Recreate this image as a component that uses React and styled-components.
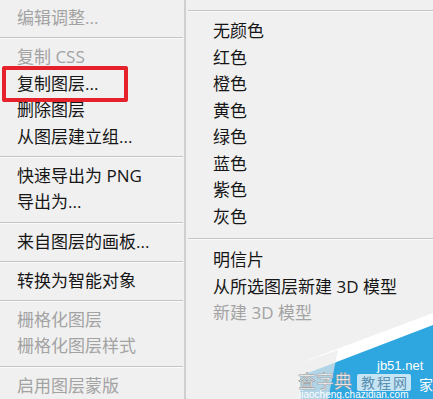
import React from "react";
import styled, { createGlobalStyle } from "styled-components";

const GlobalStyle = createGlobalStyle`
  html, body {
    margin: 0;
    padding: 0;
    background: #f0f0f0;
  }
  body {
    font-family: "Open Sans", "Noto Sans CJK SC", sans-serif;
  }
`;

const StyledFrame = styled.div`
  position: relative;
  display: flex;
  flex-direction: row;
  width: 433px;
  height: 399px;
  overflow: hidden;
  background: #f0f0f0;
`;

const StyledMenu = styled.div`
  display: flex;
  flex-direction: column;
  flex: ${(p) => (p.$side === "left" ? "0 0 184px" : "1 1 auto")};
  padding-top: ${(p) => (p.$side === "left" ? "5px" : "3px")};
  border-right: ${(p) => (p.$side === "left" ? "2px solid #cfcfcf" : "none")};
  padding-left: ${(p) => (p.$side === "left" ? "0" : "2px")};
`;

const StyledItem = styled.div`
  height: 26.5px;
  line-height: 26.5px;
  padding-left: ${(p) => (p.$side === "left" ? "17px" : "25px")};
  font-size: 17px;
  white-space: nowrap;
  color: ${(p) => (p.$disabled ? "#a3a3a3" : "#161616")};
`;

const StyledSeparator = styled.div`
  height: ${(p) => (p.$tall ? "17px" : p.$side === "left" ? "16px" : "15px")};
  display: flex;
  align-items: center;
  margin-right: ${(p) => (p.$side === "left" ? "1px" : "0")};

  &::after {
    content: "";
    flex: 1;
    height: 1px;
    background: #c4c4c4;
    box-shadow: 0 1px 0 #fbfbfb;
  }
`;

const StyledHighlight = styled.div`
  position: absolute;
  left: 2px;
  top: 66px;
  width: 118px;
  height: 28px;
  border: 4px solid #e5212b;
  border-radius: 2px;
`;

const StyledWatermark = styled.svg`
  position: absolute;
  right: 0;
  bottom: 0;
`;

const leftMenu = [
  { label: "编辑调整...", disabled: true },
  "sep",
  { label: "复制 CSS", disabled: true },
  { label: "复制图层..." },
  { label: "删除图层" },
  { label: "从图层建立组..." },
  "sep",
  { label: "快速导出为 PNG" },
  { label: "导出为..." },
  "sep",
  { label: "来自图层的画板..." },
  "sep",
  { label: "转换为智能对象" },
  "sep",
  { label: "栅格化图层", disabled: true },
  { label: "栅格化图层样式", disabled: true },
  "sep",
  { label: "启用图层蒙版", disabled: true },
];

const rightMenu = [
  "sep",
  { label: "无颜色" },
  { label: "红色" },
  { label: "橙色" },
  { label: "黄色" },
  { label: "绿色" },
  { label: "蓝色" },
  { label: "紫色" },
  { label: "灰色" },
  "tall",
  { label: "明信片" },
  { label: "从所选图层新建 3D 模型" },
  { label: "新建 3D 模型", disabled: true },
];

const Menu = ({ side, items }) => (
  <StyledMenu $side={side}>
    {items.map((item, i) =>
      typeof item === "string" ? (
        <StyledSeparator key={i} $side={side} $tall={item === "tall"} />
      ) : (
        <StyledItem key={i} $side={side} $disabled={item.disabled}>
          {item.label}
        </StyledItem>
      )
    )}
  </StyledMenu>
);

const Watermark = () => (
  <StyledWatermark width="140" height="90" viewBox="293 309 140 90">
    <polygon points="297,364 433,313 433,399 297,399" fill="#ffffff" />
    <polygon points="300,376 433,325 433,399 300,399" fill="#2ea6e0" />
    <polygon points="297,364 338,350 328,399 297,399" fill="#e9e9e9" opacity="0.7" />
    <text x="377" y="370" fill="#ffffff" fontSize="13" fontFamily="Liberation Sans, sans-serif">
      jb51.net
    </text>
    <rect x="357" y="374" width="54" height="17" rx="2" fill="#dfeef7" opacity="0.85" />
    <text x="361" y="388" fill="#5a8fb0" fontSize="14" fontFamily="Noto Sans CJK SC, sans-serif" letterSpacing="2">
      教程网
    </text>
    <text x="298" y="388" fill="#ffffff" stroke="#9a9a9a" strokeWidth="0.6" fontSize="18" fontFamily="Noto Sans CJK SC, sans-serif">
      查字典
    </text>
    <text x="419" y="390" fill="#ffffff" fontSize="14" fontFamily="Noto Sans CJK SC, sans-serif">
      家
    </text>
    <text x="299" y="398" fill="#ffffff" fontSize="10" fontFamily="Liberation Sans, sans-serif">
      jiaocheng.chazidian.com
    </text>
  </StyledWatermark>
);

const App = () => (
  <>
    <GlobalStyle />
    <StyledFrame>
      <Menu side="left" items={leftMenu} />
      <Menu side="right" items={rightMenu} />
      <StyledHighlight />
      <Watermark />
    </StyledFrame>
  </>
);

export default App;
